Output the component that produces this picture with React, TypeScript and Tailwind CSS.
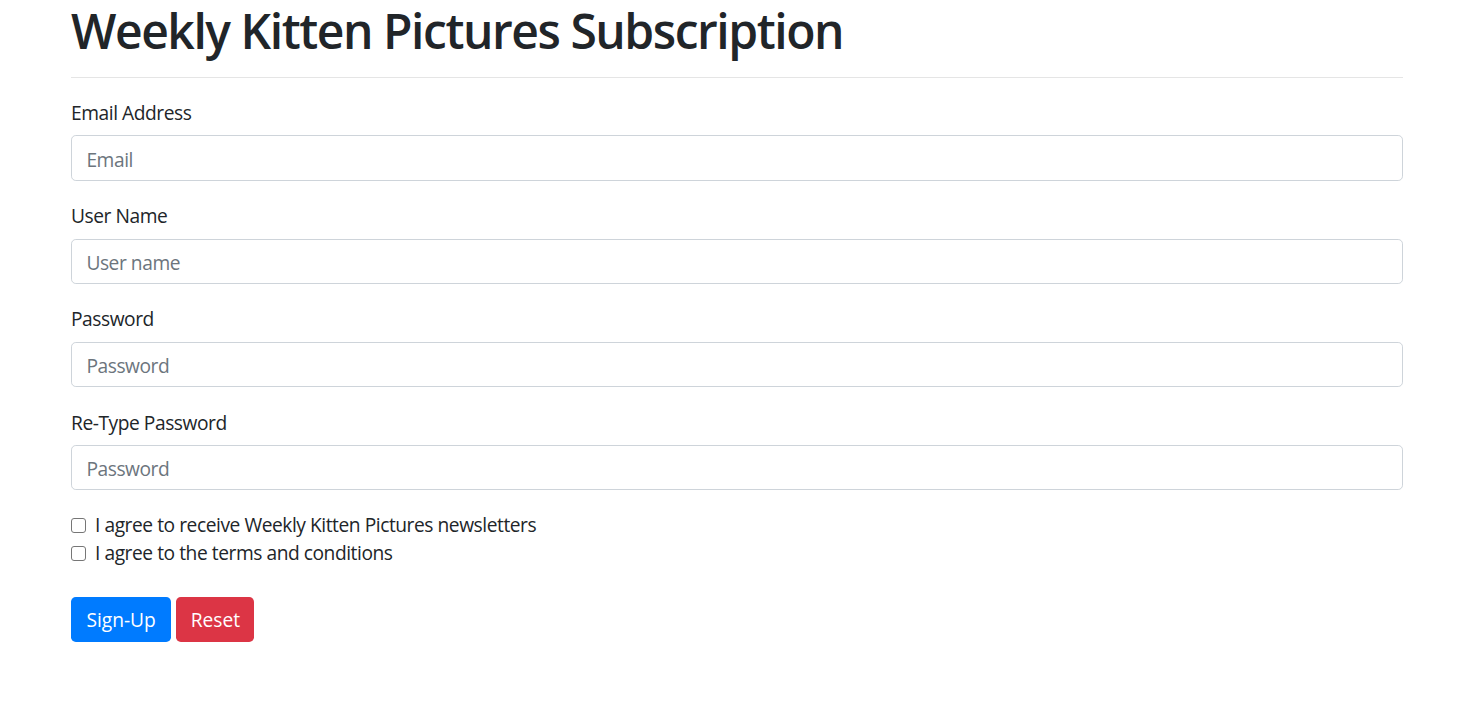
import React from "react";

const font = { fontFamily: '"Open Sans", "Noto Sans", sans-serif' };

const Field = ({ label, placeholder, type = "text" }: { label: string; placeholder: string; type?: string }) => (
  <div className="flex flex-col mb-[19.2px]">
    <label className="pt-[2px] mb-[7.6px] text-[19.2px] leading-[28.8px] tracking-[-0.45px] text-[#212529]">{label}</label>
    <input
      type={type}
      placeholder={placeholder}
      className="w-full h-[45.6px] px-[14.4px] pt-[8.2px] pb-[6.2px] text-[19.2px] tracking-[-0.45px] text-[#495057] bg-white border border-[#ced4da] rounded-[4.8px] placeholder:text-[#6c757d] outline-none"
    />
  </div>
);

const Check = ({ label }: { label: string }) => (
  <div className="flex items-start gap-[9px] h-[28.8px] text-[19.2px] tracking-[-0.45px] text-[#212529]">
    <input
      type="checkbox"
      className="shrink-0 mt-[8px] w-[15px] h-[15px] appearance-none bg-white border border-[#767676] rounded-[3px]"
    />
    <label className="pt-[2px] leading-[26.8px]">{label}</label>
  </div>
);

export default function App() {
  return (
    <div className="min-h-screen bg-white" style={font}>
      <div className="ml-[71px] w-[1332px]">
        <h1 className="pt-[1px] text-[48px] leading-[60px] font-semibold tracking-[-1.45px] text-[#212529]">Weekly Kitten Pictures Subscription</h1>
        <hr className="mt-[15.8px] mb-[19.2px] border-0 border-t border-[rgba(0,0,0,0.1)]" />
        <form>
          <Field label="Email Address" placeholder="Email" type="email" />
          <Field label="User Name" placeholder="User name" />
          <Field label="Password" placeholder="Password" type="password" />
          <Field label="Re-Type Password" placeholder="Password" type="password" />
          <Check label="I agree to receive Weekly Kitten Pictures newsletters" />
          <Check label="I agree to the terms and conditions" />
          <div className="mt-[29.6px] flex gap-[5px]">
            <button type="button" className="h-[45.6px] px-[15.4px] pt-[2px] text-[19.2px] text-white bg-[#007bff] rounded-[4.8px]">Sign-Up</button>
            <button type="button" className="h-[45.6px] px-[14.4px] pt-[2px] text-[19.2px] text-white bg-[#dc3545] rounded-[4.8px]">Reset</button>
          </div>
        </form>
      </div>
    </div>
  );
}
